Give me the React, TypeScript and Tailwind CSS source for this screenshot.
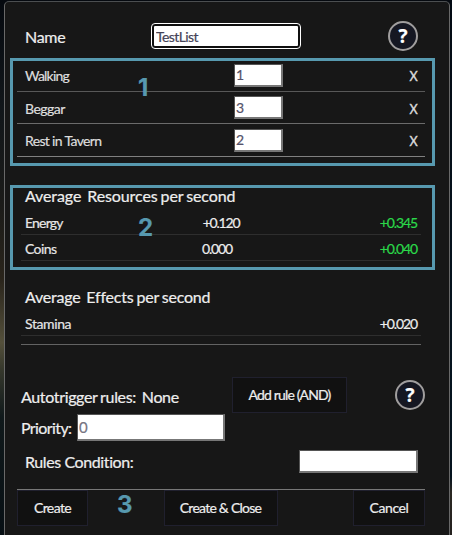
import type { ReactNode } from "react";

const actions = [
  { name: "Walking", count: "1", row: "h-[33px] border-[#585858]", track: "tracking-[-0.8px]" },
  { name: "Beggar", count: "3", row: "h-[32px] border-[#6b6b6b]", track: "tracking-[-0.5px]" },
  { name: "Rest in Tavern", count: "2", row: "h-[33px] border-[#808080]", track: "tracking-[-0.65px]" },
];

function Help() {
  return (
    <div className="flex h-[30px] w-[30px] shrink-0 items-center justify-center rounded-full border-2 border-[#a09e9e] bg-[#151722] pt-px font-['Open_Sans',sans-serif] text-[19px] leading-none font-bold text-white">
      ?
    </div>
  );
}

function Button({ children, className }: { children: ReactNode; className: string }) {
  return (
    <button className={`h-[36px] shrink-0 border border-[#20202e] bg-[#111111] text-[14px] leading-none whitespace-nowrap ${className}`}>
      {children}
    </button>
  );
}

function Stat({ name, mid, value, className }: { name: string; mid?: string; value: string; className: string }) {
  return (
    <div className={`mr-[28px] ml-4 flex items-center border-b border-[#2e2e2e] pr-1 pl-1 text-[14px] leading-none ${className}`}>
      <span className="w-[154px] text-[#e6e6e6]">{name}</span>
      <span className="w-[84px] text-center tracking-[-1.2px] text-[#ededed]">{mid}</span>
      <span className="flex-1 text-right tracking-[-1.1px]">{value}</span>
    </div>
  );
}

export default function App() {
  return (
    <div className="relative h-[535px] w-[452px] overflow-hidden bg-[linear-gradient(180deg,#05090f_0%,#11161a_20%,#1b1b19_38%,#29241b_52%,#54503b_64%,#36382c_69%,#10191b_78%,#070f14_100%)] pt-px pl-1 font-[Lato,sans-serif] text-[#eeeeee] [-webkit-text-stroke:0.2px]">
      <div className="absolute top-0 right-0 h-full w-[2px] bg-[linear-gradient(180deg,#030a13_0%,#06141f_60%,#05131e_89%,#2b2823_92%,#24211f_100%)]" />
      <div className="relative h-[550px] w-[446px] rounded-[5px] border border-[#696969] border-t-[#4b4e50] bg-[#171717]">
        <div className="mt-[13px] flex h-[42px] items-center pr-[31px] pl-5">
          <span className="w-[126px] pt-[2px] text-[16px] tracking-[-0.3px]">Name</span>
          <div className="h-[26px] w-[150px] rounded-[4px] border-[1.5px] border-white bg-[#101010] p-[2px]">
            <input defaultValue="TestList" className="block h-full w-full rounded-[1px] bg-white pl-[2px] text-[14px] leading-none tracking-[-0.6px] text-[#454357] outline-none" />
          </div>
          <div className="ml-auto"><Help /></div>
        </div>

        <div className="mt-[2px] mr-6 ml-3">
          {actions.map((a) => (
            <div key={a.name} className={`flex items-center border-b pr-[7px] pl-2 text-[14px] leading-none ${a.row}`}>
              <span className={`w-[209px] pt-[2px] text-[#dedede] ${a.track}`}>{a.name}</span>
              <input defaultValue={a.count} className="h-[23px] w-[49px] border border-r-2 border-b-2 border-[#777777] border-t-[#555555] border-l-[#555555] bg-white pl-px text-[14px] leading-none text-[#55536a] outline-none" />
              <span className="ml-auto scale-x-90 pt-[2px] text-[14px] text-[#dddddd] [-webkit-text-stroke:0.4px]">X</span>
            </div>
          ))}
        </div>

        <h2 className="mt-7 h-[22px] pl-5 text-[16px] leading-[21px] tracking-[-0.1px] whitespace-pre [word-spacing:-1px]">Average  Resources per second</h2>
        <Stat name="Energy" mid="+0.120" value="+0.345" className="h-[28px] pt-[4px] tracking-[-0.8px] [&>span:last-child]:text-[#2bd84a]" />
        <Stat name="Coins" mid="0.000" value="+0.040" className="h-[26px] pt-[2px] tracking-[-0.6px] [&>span:last-child]:text-[#2bd84a] [&>span:nth-child(2)]:pr-2" />
        <h2 className="mt-[25px] h-[22px] pl-5 text-[16px] leading-[21px] tracking-[-0.2px] whitespace-pre [word-spacing:-1px]">Average  Effects per second</h2>
        <Stat name="Stamina" value="+0.020" className="h-[28px] pt-[4px] tracking-[-0.4px]" />
        <div className="mt-[8px] mr-[28px] ml-4 h-px bg-[#636363]" />

        <div className="mt-[32px] flex h-[36px] items-center pr-6 pl-4">
          <span className="w-[211px] pt-[3px] text-[16px] tracking-[-0.35px] whitespace-pre [word-spacing:-0.8px]">Autotrigger rules:  None</span>
          <Button className="w-[115px] tracking-[-0.85px]">Add rule (AND)</Button>
          <div className="ml-auto"><Help /></div>
        </div>
        <div className="mt-px flex h-[27px] items-center pl-4">
          <span className="w-[56px] text-[16px] tracking-[-0.6px]">Priority:</span>
          <input defaultValue="0" className="h-[27px] w-[148px] border border-r-2 border-b-2 border-[#777777] border-t-[#555555] border-l-[#555555] bg-white pl-px text-[15px] leading-none text-[#777582] outline-none" />
        </div>
        <div className="mt-[9px] flex h-[23px] items-center pl-5">
          <span className="w-[274px] pt-px text-[16px] tracking-[-0.4px]">Rules Condition:</span>
          <input className="h-[23px] w-[119px] border border-r-2 border-b-2 border-[#777777] border-t-[#555555] border-l-[#555555] bg-white outline-none" />
        </div>
        <div className="mt-4 mr-6 ml-3 flex justify-between border-t border-[#777777]">
          <Button className="w-[71px] tracking-[-0.6px]">Create</Button>
          <Button className="w-[114px] tracking-[-0.75px]">Create &amp; Close</Button>
          <Button className="w-[72px] tracking-[-0.4px]">Cancel</Button>
        </div>
      </div>

      <div className="pointer-events-none absolute top-[58px] left-[10px] h-[108px] w-[425px] border-[3px] border-[#5799af]" />
      <div className="pointer-events-none absolute top-[185px] left-[10px] h-[85px] w-[425px] border-[3px] border-[#5799af]" />
      <span className="absolute top-[76px] left-[138px] font-[Inter,sans-serif] text-[24px] leading-[24px] font-bold text-[#5799af]">1</span>
      <span className="absolute top-[216px] left-[138px] font-[Inter,sans-serif] text-[24px] leading-[24px] font-bold text-[#5799af]">2</span>
      <span className="absolute top-[493px] left-[117px] font-[Inter,sans-serif] text-[24px] leading-[24px] font-bold text-[#5799af]">3</span>
    </div>
  );
}
